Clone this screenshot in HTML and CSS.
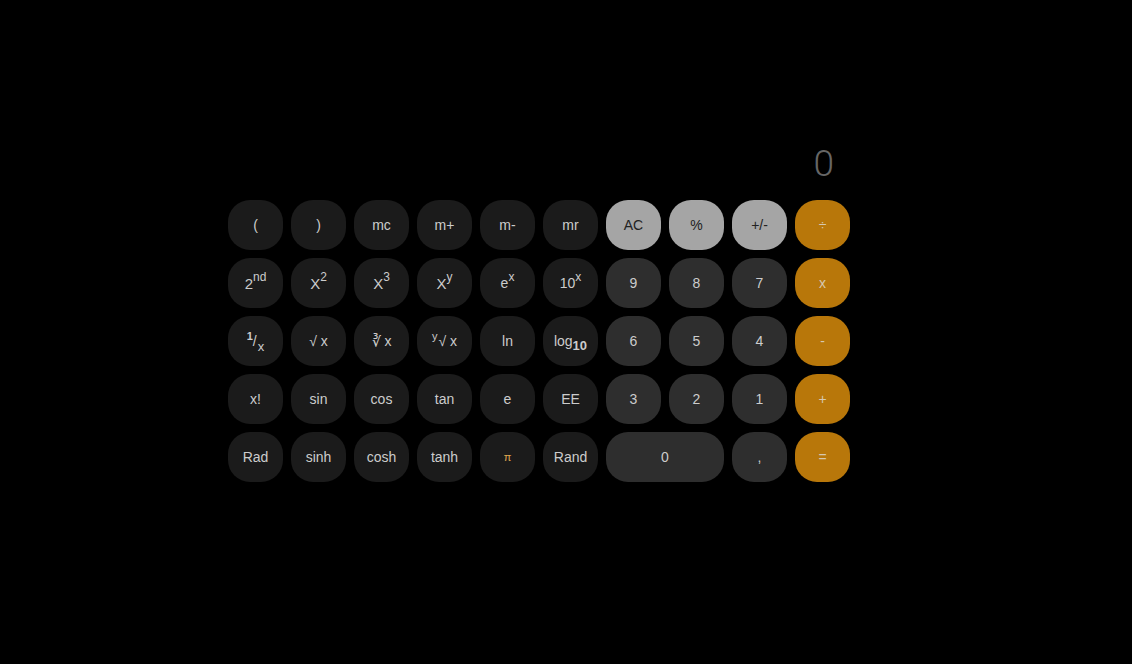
FILE: index.html
```html
<!DOCTYPE html>
<html>
<head>
<meta charset="utf-8">
<link rel="stylesheet" href="styles.css">
</head>
<body>
<div class="calc">
  <div class="display">0</div>
  <div class="keys">
    <div class="key fn">(</div>
    <div class="key fn">)</div>
    <div class="key fn">mc</div>
    <div class="key fn">m+</div>
    <div class="key fn">m-</div>
    <div class="key fn">mr</div>
    <div class="key gray">AC</div>
    <div class="key gray">%</div>
    <div class="key gray">+/-</div>
    <div class="key op">÷</div>

    <div class="key fn big">2<sup>nd</sup></div>
    <div class="key fn big">X<sup>2</sup></div>
    <div class="key fn big">X<sup>3</sup></div>
    <div class="key fn big">X<sup>y</sup></div>
    <div class="key fn">e<sup>x</sup></div>
    <div class="key fn">10<sup>x</sup></div>
    <div class="key num">9</div>
    <div class="key num">8</div>
    <div class="key num">7</div>
    <div class="key op">x</div>

    <div class="key fn"><sup class="hi">1</sup>/<sub class="lo">x</sub></div>
    <div class="key fn">√ x</div>
    <div class="key fn">∛ x</div>
    <div class="key fn"><sup class="ysup">y</sup>√ x</div>
    <div class="key fn">ln</div>
    <div class="key fn">log<sub class="lg">10</sub></div>
    <div class="key num">6</div>
    <div class="key num">5</div>
    <div class="key num">4</div>
    <div class="key op">-</div>

    <div class="key fn">x!</div>
    <div class="key fn">sin</div>
    <div class="key fn">cos</div>
    <div class="key fn">tan</div>
    <div class="key fn">e</div>
    <div class="key fn">EE</div>
    <div class="key num">3</div>
    <div class="key num">2</div>
    <div class="key num">1</div>
    <div class="key op">+</div>

    <div class="key fn">Rad</div>
    <div class="key fn">sinh</div>
    <div class="key fn">cosh</div>
    <div class="key fn">tanh</div>
    <div class="key fn pi">π</div>
    <div class="key fn">Rand</div>
    <div class="key num zero">0</div>
    <div class="key num">,</div>
    <div class="key op">=</div>
  </div>
</div>
</body>
</html>
```

FILE: styles.css
```css
html, body {
  margin: 0;
  padding: 0;
  background: #000;
  height: 100%;
}

body {
  font-family: "Liberation Sans", Arial, sans-serif;
}

.calc {
  width: 676px;
  margin: 0 auto;
  padding-top: 140px;
}

.display {
  width: 622px;
  box-sizing: border-box;
  padding-right: 16px;
  text-align: right;
  font-family: Roboto, "Liberation Sans", sans-serif;
  font-weight: 300;
  font-size: 37px;
  line-height: 48px;
  height: 48px;
  color: #666;
  margin-bottom: 12px;
}

.keys {
  display: grid;
  grid-template-columns: repeat(10, 55px);
  grid-auto-rows: 50px;
  gap: 8px;
}

.key {
  display: flex;
  align-items: center;
  justify-content: center;
  border-radius: 22px;
  font-size: 14px;
  color: #cccccc;
  line-height: 1;
}

.fn {
  background: #1b1b1b;
}

.num {
  background: #2e2e2e;
}

.gray {
  background: #a5a5a5;
  color: #222;
}

.op {
  background: #b8770a;
  color: #d6c8b0;
}

.zero {
  grid-column: span 2;
}

.big {
  font-size: 15px;
}

sup {
  font-size: 12px;
  position: relative;
  top: -6px;
  vertical-align: baseline;
}

sub {
  font-size: 11px;
  vertical-align: baseline;
}

.hi {
  top: -5px;
  font-weight: bold;
  font-size: 11px;
}

.lo {
  position: relative;
  top: 5px;
  font-size: 13px;
  margin-left: 1px;
}

.lg {
  position: relative;
  top: 4px;
  font-size: 13px;
  font-weight: bold;
}

.ysup {
  top: -5px;
  font-size: 11px;
  margin-right: 1px;
}

.pi {
  font-size: 11px;
  color: #e0a850;
}
```
